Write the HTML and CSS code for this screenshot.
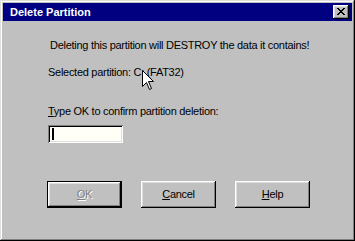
FILE: index.html
```html
<!DOCTYPE html>
<html>
<head>
<meta charset="utf-8">
<link rel="stylesheet" href="styles.css">
</head>
<body>
<div class="window">
  <div class="titlebar">
    <span class="title">Delete Partition</span>
    <button class="close" aria-label="Close">
      <svg width="8" height="7" viewBox="0 0 8 7"><path d="M0 0h2v1h1v1h2V1h1V0h2v1H7v1H6v1H5v1h1v1h1v1h1v1H6V6H5V5H3v1H2v1H0V6h1V5h1V4h1V3H2V2H1V1H0z" fill="#000"/></svg>
    </button>
  </div>
  <div class="content">
    <p class="warn">Deleting this partition will DESTROY the data it contains!</p>
    <p class="sel">Selected partition: C: (FAT32)</p>
    <label class="lbl"><u>T</u>ype OK to confirm partition deletion:</label>
    <div class="field"><span class="caret"></span></div>
    <div class="buttons">
      <div class="btn default"><span class="inner disabled"><u>O</u>K</span></div>
      <div class="btn"><span class="inner"><u>C</u>ancel</span></div>
      <div class="btn"><span class="inner"><u>H</u>elp</span></div>
    </div>
  </div>
  <svg class="cursor" width="12" height="20" viewBox="0 0 12 20"><path d="M0.5 0.5V16.5L4.5 12.5L7.5 19.5L9.5 18.5L6.5 11.5H11.5Z" fill="#fff" stroke="#000" stroke-width="1"/></svg>
</div>
</body>
</html>
```

FILE: styles.css
```css
html, body {
  margin: 0;
  padding: 0;
  background: #c0c0c0;
}
.window {
  position: relative;
  width: 355px;
  height: 241px;
  box-sizing: border-box;
  background: #c0c0c0;
  padding: 3px;
  box-shadow: inset -1px -1px 0 #000, inset 1px 1px 0 #dfdfdf, inset -2px -2px 0 #808080, inset 2px 2px 0 #fff;
  font-family: "Liberation Sans", Arial, sans-serif;
  font-size: 11px;
  color: #000;
}
.titlebar {
  height: 18px;
  background: #000080;
  display: flex;
  align-items: center;
  justify-content: space-between;
  padding: 0 3px 0 7px;
}
.title {
  color: #fff;
  font-weight: bold;
  font-size: 11px;
}
.close {
  width: 16px;
  height: 14px;
  padding: 0;
  margin: 0;
  border: none;
  background: #c0c0c0;
  box-shadow: inset -1px -1px 0 #000, inset 1px 1px 0 #fff, inset -2px -2px 0 #808080, inset 2px 2px 0 #dfdfdf;
  display: flex;
  align-items: center;
  justify-content: center;
}
.close svg { display: block; margin: 0 0 1px 0; }
.content {
  display: flex;
  flex-direction: column;
  padding: 0 0 0 45px;
  letter-spacing: -0.28px;
}
p { margin: 0; }
.warn {
  margin-top: 18px;
  margin-left: 2px;
  line-height: 13px;
}
.sel {
  margin-top: 14px;
  line-height: 13px;
}
.lbl {
  margin-top: 26px;
  line-height: 13px;
}
.field {
  margin-top: 7px;
  width: 75px;
  height: 18px;
  box-sizing: border-box;
  background: #fffff8;
  box-shadow: inset 1px 1px 0 #808080, inset -1px -1px 0 #fff, inset 2px 2px 0 #000, inset -2px -2px 0 #dfdfdf;
  padding: 3px 0 0 4px;
}
.caret {
  display: block;
  width: 1px;
  height: 12px;
  background: #000;
  box-shadow: 1px 0 0 #000;
}
.buttons {
  margin-top: 38px;
  display: flex;
  gap: 19px;
  margin-left: -1px;
}
.btn {
  width: 75px;
  height: 27px;
  box-sizing: border-box;
  background: #c0c0c0;
  box-shadow: inset -1px -1px 0 #000, inset 1px 1px 0 #fff, inset -2px -2px 0 #808080, inset 2px 2px 0 #dfdfdf;
  display: flex;
  align-items: center;
  justify-content: center;
}
.btn.default {
  border: 1px solid #000;
}
.inner { line-height: 13px; }
.inner.disabled {
  color: #808080;
  text-shadow: 1px 1px 0 #fff;
}
.cursor {
  position: absolute;
  left: 142px;
  top: 70px;
}
```
